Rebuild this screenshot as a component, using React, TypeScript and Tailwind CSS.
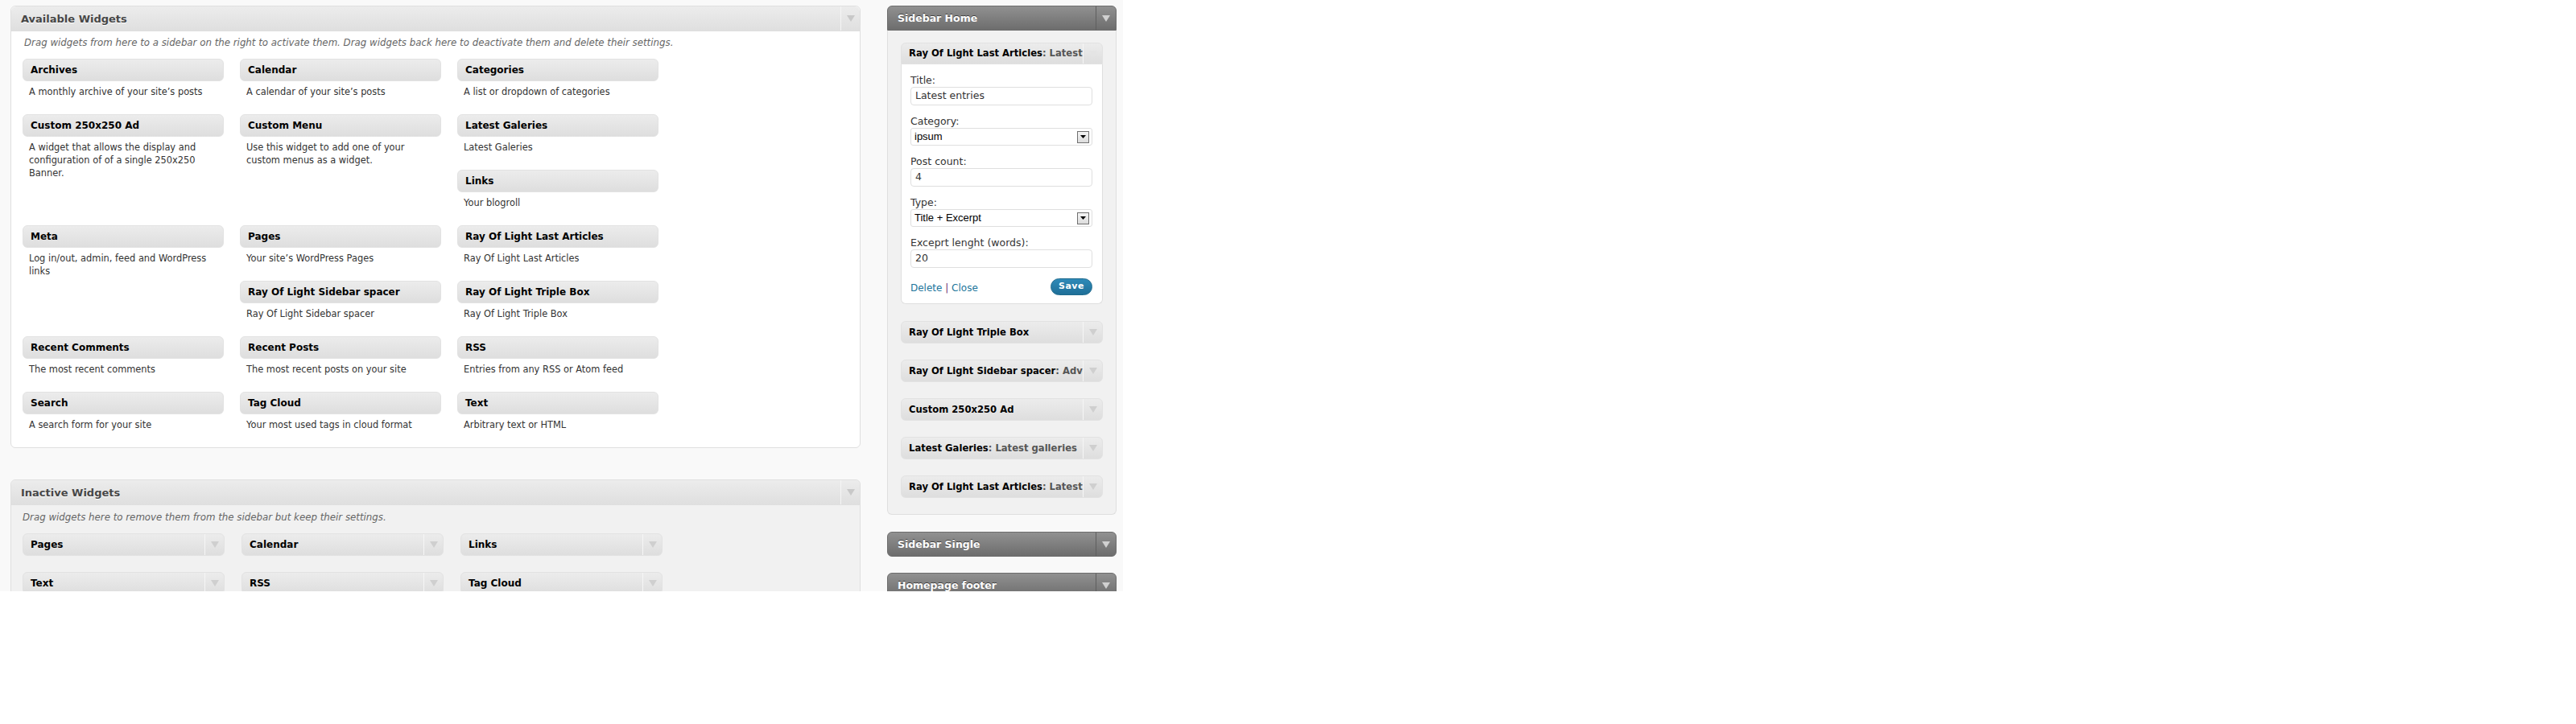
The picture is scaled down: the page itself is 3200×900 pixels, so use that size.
import React from "react";

const Arrow = ({ color = "#c4c4c4" }: { color?: string }) => (
  <svg width="10" height="8" viewBox="0 0 10 8">
    <polygon points="0,0 10,0 5,8" fill={color} />
  </svg>
);

const COL: Record<number, string> = { 1: "col-start-1", 2: "col-start-2", 3: "col-start-3" };
const ROW: Record<number, string> = {
  1: "row-start-1",
  2: "row-start-2",
  3: "row-start-3",
  4: "row-start-4",
  5: "row-start-5",
  6: "row-start-6",
  7: "row-start-7",
};

const avail = [
  { t: "Archives", d: "A monthly archive of your site’s posts", c: 1, r: 1 },
  { t: "Calendar", d: "A calendar of your site’s posts", c: 2, r: 1 },
  { t: "Categories", d: "A list or dropdown of categories", c: 3, r: 1 },
  { t: "Custom 250x250 Ad", d: "A widget that allows the display and configuration of of a single 250x250 Banner.", c: 1, r: 2 },
  { t: "Custom Menu", d: "Use this widget to add one of your custom menus as a widget.", c: 2, r: 2 },
  { t: "Latest Galeries", d: "Latest Galeries", c: 3, r: 2 },
  { t: "Links", d: "Your blogroll", c: 3, r: 3 },
  { t: "Meta", d: "Log in/out, admin, feed and WordPress links", c: 1, r: 4 },
  { t: "Pages", d: "Your site’s WordPress Pages", c: 2, r: 4 },
  { t: "Ray Of Light Last Articles", d: "Ray Of Light Last Articles", c: 3, r: 4 },
  { t: "Ray Of Light Sidebar spacer", d: "Ray Of Light Sidebar spacer", c: 2, r: 5 },
  { t: "Ray Of Light Triple Box", d: "Ray Of Light Triple Box", c: 3, r: 5 },
  { t: "Recent Comments", d: "The most recent comments", c: 1, r: 6 },
  { t: "Recent Posts", d: "The most recent posts on your site", c: 2, r: 6 },
  { t: "RSS", d: "Entries from any RSS or Atom feed", c: 3, r: 6 },
  { t: "Search", d: "A search form for your site", c: 1, r: 7 },
  { t: "Tag Cloud", d: "Your most used tags in cloud format", c: 2, r: 7 },
  { t: "Text", d: "Arbitrary text or HTML", c: 3, r: 7 },
];

const inactive = ["Pages", "Calendar", "Links", "Text", "RSS", "Tag Cloud"];

const BoxHeader = ({ title }: { title: string }) => (
  <div className="flex h-[31px] items-stretch rounded-t-[6px] border-b border-[#dfdfdf] bg-linear-to-b from-[#ececec] to-[#dfdfdf]">
    <div className="flex-1 pl-[12px] text-[13px] font-bold leading-[31px] text-[#464646] [text-shadow:0_1px_0_#fff]">
      {title}
    </div>
    <div className="flex w-[24px] items-center justify-center border-l border-[#f5f5f5]">
      <Arrow color="#c8c8c8" />
    </div>
  </div>
);

const WidgetTop = ({ title, sub, w, size }: { title: string; sub?: string; w: string; size: string }) => (
  <div className={`flex h-[28px] items-stretch rounded-[6px] border border-[#e2e2e2] bg-linear-to-b from-[#ececec] to-[#dedede] ${w}`}>
    <div className={`flex-1 overflow-hidden whitespace-nowrap pl-[9px] font-bold leading-[26px] text-black ${size}`}>
      {title}
      {sub && <span className="text-[#555]">{sub}</span>}
    </div>
    <div className="flex w-[24px] shrink-0 items-center justify-center border-l border-[#f6f6f6]">
      <Arrow color="#cfcfcf" />
    </div>
  </div>
);

const SidebarHead = ({ title, open }: { title: string; open?: boolean }) => (
  <div
    className={`flex h-[31px] items-stretch border border-[#6d6d6d] bg-linear-to-b from-[#919191] to-[#6d6d6d] ${
      open ? "rounded-t-[6px]" : "rounded-[6px]"
    }`}
  >
    <div className="flex-1 pl-[12px] text-[12.5px] font-bold leading-[29px] text-white [text-shadow:0_-1px_0_#3f3f3f]">
      {title}
    </div>
    <div className="flex w-[25px] items-center justify-center border-l border-[#5f5f5f]">
      <Arrow color="#d0d0d0" />
    </div>
  </div>
);

const Field = ({ label, value, select }: { label: string; value: string; select?: boolean }) => (
  <div className="mb-[12px]">
    <div className="text-[12.5px] leading-[16px] text-[#333]">{label}</div>
    {select ? (
      <div className="flex h-[22px] w-[226px] items-center rounded-[3px] border border-[#dfdfdf] bg-white pl-[4px] pr-[3px]">
        <span className="flex-1 font-['Liberation_Sans',sans-serif] text-[13px] text-black">{value}</span>
        <span className="flex h-[15px] w-[15px] items-center justify-center border border-[#707070] bg-linear-to-b from-[#f4f4f4] to-[#dcdcdc]">
          <svg width="7" height="4" viewBox="0 0 7 4">
            <polygon points="0,0 7,0 3.5,4" fill="#000" />
          </svg>
        </span>
      </div>
    ) : (
      <div className="flex h-[23px] w-[226px] items-center rounded-[4px] border border-[#dfdfdf] bg-white pl-[5px] text-[12.5px] text-[#333]">
        {value}
      </div>
    )}
  </div>
);

export default function App() {
  return (
    <div className="min-h-[900px] w-[3200px] bg-white font-['DejaVu_Sans',sans-serif]">
      <div className="flex h-[735px] w-[1395px] gap-[33px] overflow-hidden bg-[#f9f9f9] pl-[13px] pt-[7px]">
        {/* Left column */}
        <div className="flex w-[1056px] shrink-0 flex-col gap-[39px]">
          <div className="rounded-[6px] border border-[#dfdfdf] bg-white">
            <BoxHeader title="Available Widgets" />
            <div className="pl-[16px] pt-[6px] text-[11.8px] italic leading-[16px] text-[#666]">
              Drag widgets from here to a sidebar on the right to activate them. Drag widgets back here to deactivate them and delete their settings.
            </div>
            <div className="mt-[12px] grid grid-cols-[250px_250px_250px] auto-rows-[69px] gap-x-[20px] pl-[14px]">
              {avail.map((w) => (
                <div key={w.t} className={`${COL[w.c]} ${ROW[w.r]}`}>
                  <div className="h-[28px] rounded-[6px] border border-[#e2e2e2] bg-linear-to-b from-[#ececec] to-[#dedede] pl-[9px] text-[12px] font-bold leading-[26px] text-black">
                    {w.t}
                  </div>
                  <div className="px-[8px] pt-[5px] text-[11.4px] leading-[16px] text-[#333]">{w.d}</div>
                </div>
              ))}
            </div>
          </div>

          <div className="rounded-t-[6px] border border-[#dfdfdf] bg-[#f1f1f1] pb-[40px]">
            <BoxHeader title="Inactive Widgets" />
            <div className="pl-[14px] pt-[7px] text-[11.8px] italic leading-[16px] text-[#666]">
              Drag widgets here to remove them from the sidebar but keep their settings.
            </div>
            <div className="mt-[12px] grid grid-cols-[251px_251px_251px] gap-x-[21px] gap-y-[20px] pl-[14px]">
              {inactive.map((t) => (
                <WidgetTop key={t} title={t} w="w-[251px]" size="text-[12px]" />
              ))}
            </div>
          </div>
        </div>

        {/* Right column */}
        <div className="flex w-[285px] shrink-0 flex-col">
          <SidebarHead title="Sidebar Home" open />
          <div className="rounded-b-[6px] border border-t-0 border-[#dfdfdf] bg-[#f1f1f1] px-[16px] pb-[20px] pt-[15px]">
            <div className="w-[251px]">
              <div className="flex h-[27px] items-stretch rounded-t-[6px] border border-[#e2e2e2] bg-linear-to-b from-[#ececec] to-[#dedede]">
                <div className="flex-1 overflow-hidden whitespace-nowrap pl-[9px] text-[11.6px] font-bold leading-[25px] text-black">
                  Ray Of Light Last Articles<span className="text-[#555]">: Latest entries</span>
                </div>
                <div className="flex w-[24px] shrink-0 items-center justify-center border-l border-[#f6f6f6]">
                  <Arrow color="#e4e4e4" />
                </div>
              </div>
              <div className="rounded-b-[6px] border border-t-0 border-[#dfdfdf] bg-white px-[11px] pb-[10px] pt-[12px]">
                <Field label="Title:" value="Latest entries" />
                <Field label="Category:" value="ipsum" select />
                <Field label="Post count:" value="4" />
                <Field label="Type:" value="Title + Excerpt" select />
                <Field label="Exceprt lenght (words):" value="20" />
                <div className="flex items-center justify-between">
                  <div className="pt-[4px] text-[12px] text-[#21759b]">
                    Delete <span className="text-[#682b6b]">|</span> Close
                  </div>
                  <div className="mr-[1px] flex h-[21px] items-center rounded-full border border-[#1e6a8d] bg-linear-to-b from-[#2e8ab8] to-[#1f6f98] px-[9px] text-[11px] font-bold tracking-[0.5px] text-white">
                    Save
                  </div>
                </div>
              </div>
            </div>
            <div className="mt-[21px] flex flex-col gap-[20px]">
              <WidgetTop title="Ray Of Light Triple Box" w="w-[251px]" size="text-[11.6px]" />
              <WidgetTop title="Ray Of Light Sidebar spacer" sub=": Advertisement" w="w-[251px]" size="text-[11.6px]" />
              <WidgetTop title="Custom 250x250 Ad" w="w-[251px]" size="text-[11.6px]" />
              <WidgetTop title="Latest Galeries" sub=": Latest galleries" w="w-[251px]" size="text-[11.6px]" />
              <WidgetTop title="Ray Of Light Last Articles" sub=": Latest entries" w="w-[251px]" size="text-[11.6px]" />
            </div>
          </div>
          <div className="mt-[21px]">
            <SidebarHead title="Sidebar Single" />
          </div>
          <div className="mt-[20px]">
            <SidebarHead title="Homepage footer" />
          </div>
        </div>
      </div>
    </div>
  );
}
